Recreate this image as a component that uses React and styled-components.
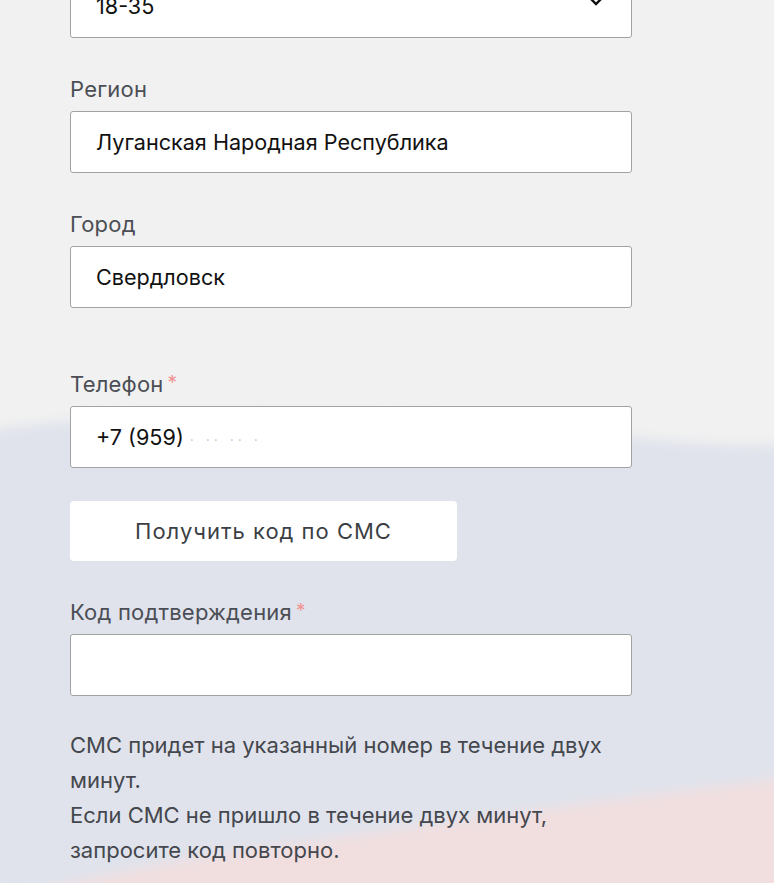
import styled, { createGlobalStyle } from "styled-components";

const GlobalStyle = createGlobalStyle`
  html, body {
    margin: 0;
    padding: 0;
    background: #f1f1f1;
  }
  body {
    font-family: Inter, "Noto Sans", "Liberation Sans", sans-serif;
    overflow: hidden;
  }
`;

const Page = styled.div`
  position: relative;
  width: 774px;
  height: 883px;
  overflow: hidden;
  background: #f1f1f1;
`;

const Backdrop = styled.svg`
  position: absolute;
  inset: 0;
  width: 100%;
  height: 100%;
  z-index: 0;
`;

const Form = styled.form`
  position: relative;
  z-index: 1;
  display: flex;
  flex-direction: column;
  width: 562px;
  margin-left: 70px;
  margin-top: -26px;
`;

const Field = styled.div`
  display: flex;
  flex-direction: column;
  margin-top: ${(p) => p.$gap || 0}px;
`;

const Label = styled.label`
  font-size: 22px;
  line-height: 26px;
  color: #4b4e54;
  margin-bottom: 9px;
  letter-spacing: 0.2px;
`;

const Star = styled.span`
  color: #f29292;
  margin-left: 4px;
  font-size: 19px;
  vertical-align: top;
  line-height: 24px;
`;

const Box = styled.div`
  position: relative;
  box-sizing: border-box;
  height: ${(p) => p.$h || 62}px;
  background: #ffffff;
  border: 1px solid #a2a2a2;
  border-radius: 3px;
  display: flex;
  align-items: center;
  padding: 0 25px;
`;

const Value = styled.input`
  border: none;
  outline: none;
  background: transparent;
  width: 100%;
  padding: 0;
  font-family: inherit;
  font-size: 21.6px;
  color: #111111;
`;

const Masked = styled.span`
  margin-left: 6px;
  letter-spacing: 4px;
  color: #c8c8c8;
  font-size: 14px;
`;

const Chevron = styled.svg`
  position: absolute;
  right: 28px;
  top: 22px;
`;

const SmsButton = styled.button`
  margin-top: 33px;
  width: 387px;
  height: 60px;
  border: none;
  border-radius: 4px;
  background: #ffffff;
  font-family: inherit;
  font-size: 22px;
  letter-spacing: 1px;
  color: #3c3f45;
  cursor: pointer;
`;

const Hint = styled.p`
  margin: 32px 0 0;
  font-size: 22px;
  line-height: 35px;
  color: #44474d;
  letter-spacing: 0;
`;

export default function App() {
  return (
    <>
      <GlobalStyle />
      <Page>
        <Backdrop viewBox="0 0 774 883" preserveAspectRatio="none">
          <defs>
            <filter id="soft" x="-10%" y="-10%" width="120%" height="120%">
              <feGaussianBlur stdDeviation="6" />
            </filter>
          </defs>
          <path
            d="M-20 432 C 150 405, 360 410, 560 430 C 660 440, 730 448, 800 445 L 800 900 L -20 900 Z"
            fill="#e0e3ec"
            filter="url(#soft)"
          />
          <path
            d="M-20 905 C 80 880, 160 862, 260 848 C 420 826, 600 800, 800 776 L 800 905 Z"
            fill="#f1dfe0"
            filter="url(#soft)"
          />
        </Backdrop>
        <Form onSubmit={(e) => e.preventDefault()}>
          <Field>
            <Box $h={64}>
              <Value defaultValue="18-35" readOnly />
              <Chevron width="14" height="10" viewBox="0 0 14 10">
                <path d="M2 2 L7 7 L12 2" fill="none" stroke="#111" strokeWidth="2.4" />
              </Chevron>
            </Box>
          </Field>

          <Field $gap={38}>
            <Label>Регион</Label>
            <Box>
              <Value defaultValue="Луганская Народная Республика" />
            </Box>
          </Field>

          <Field $gap={38}>
            <Label>Город</Label>
            <Box>
              <Value defaultValue="Свердловск" />
            </Box>
          </Field>

          <Field $gap={63}>
            <Label>
              Телефон<Star>*</Star>
            </Label>
            <Box>
              <Value as="div">
                +7 (959)<Masked>· ·· ·· ·</Masked>
              </Value>
            </Box>
          </Field>

          <div>
            <SmsButton type="button">Получить код по СМС</SmsButton>
          </div>

          <Field $gap={38}>
            <Label>
              Код подтверждения<Star>*</Star>
            </Label>
            <Box>
              <Value />
            </Box>
          </Field>

          <Hint>
            СМС придет на указанный номер в течение двух минут.
            <br />
            Если СМС не пришло в течение двух минут, запросите код повторно.
          </Hint>
        </Form>
      </Page>
    </>
  );
}
